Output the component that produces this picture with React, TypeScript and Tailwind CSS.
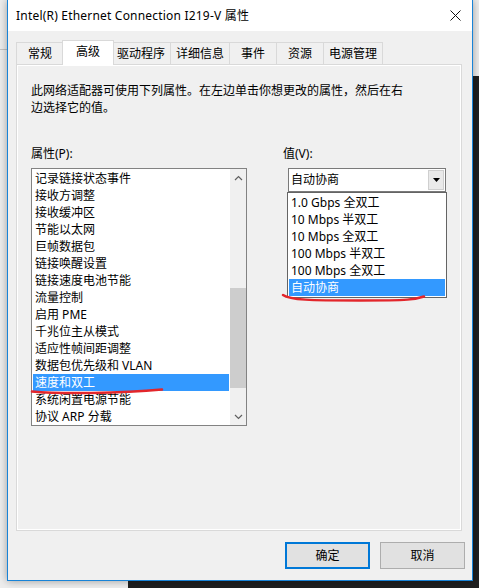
import React from "react";

const props = [
  "记录链接状态事件",
  "接收方调整",
  "接收缓冲区",
  "节能以太网",
  "巨帧数据包",
  "链接唤醒设置",
  "链接速度电池节能",
  "流量控制",
  "启用 PME",
  "千兆位主从模式",
  "适应性帧间距调整",
  "数据包优先级和 VLAN",
  "速度和双工",
  "系统闲置电源节能",
  "协议 ARP 分载",
];

const values = [
  "1.0 Gbps 全双工",
  "10 Mbps 半双工",
  "10 Mbps 全双工",
  "100 Mbps 半双工",
  "100 Mbps 全双工",
  "自动协商",
];

const tabs = ["常规", "高级", "驱动程序", "详细信息", "事件", "资源", "电源管理"];
const tabW = ["w-[48px]", "w-[52px]", "w-[60px]", "w-[60px]", "w-[48px]", "w-[48px]", "w-[60px]"];

function Chevron({ up }: { up?: boolean }) {
  return (
    <svg width="9" height="6" viewBox="0 0 9 6">
      <path
        d={up ? "M1 5 L4.5 1.5 L8 5" : "M1 1 L4.5 4.5 L8 1"}
        fill="none"
        stroke="#606060"
        strokeWidth="1.2"
      />
    </svg>
  );
}

export default function App() {
  return (
    <div className="relative w-[479px] h-[588px] overflow-hidden bg-[#ededed] font-['Noto_Sans','Noto_Sans_CJK_SC',sans-serif] text-[12px] text-black">
      {/* desktop background */}
      <div className="absolute left-0 top-[49px] w-[7px] h-px bg-[#c4c4c4]" />
      <div className="absolute left-[473px] top-[76px] right-0 bottom-0 bg-[#1f1f1f]" />
      <div className="absolute left-[128px] top-[581px] right-0 bottom-0 bg-[#1f1f1f]" />

      {/* window */}
      <div className="absolute left-[7px] top-0 w-[466px] h-[581px] border-x border-b border-[#1883d7] bg-[#f0f0f0] flex flex-col shadow-[0_0_8px_rgba(0,0,0,0.35)]">
        {/* title bar */}
        <div className="h-[31px] bg-white flex items-center justify-between pl-[8px] pr-[11px] shrink-0">
          <span className="leading-none tracking-[0.2px]">Intel(R) Ethernet Connection I219-V 属性</span>
          <svg width="11" height="11" viewBox="0 0 11 11">
            <path d="M0.5 0.5 L10.5 10.5 M10.5 0.5 L0.5 10.5" stroke="#111" strokeWidth="1" />
          </svg>
        </div>

        {/* tabs */}
        <div className="mt-[9px] pl-[8px] flex items-end h-[24px] shrink-0">
          {tabs.map((t, i) =>
            i === 1 ? (
              <div
                key={t}
                className={`${tabW[i]} h-[25px] -mx-[2px] relative top-[1px] z-10 bg-white border border-b-0 border-[#d9d9d9] flex items-center justify-center pb-[3px]`}
              >
                {t}
              </div>
            ) : (
              <div
                key={t}
                className={`${tabW[i]} h-[22px] bg-[#f0f0f0] border border-b-0 border-[#d9d9d9] -ml-px first:ml-0 flex items-center justify-center`}
              >
                {t}
              </div>
            )
          )}
        </div>

        {/* panel */}
        <div className="ml-[8px] w-[446px] h-[467px] border border-[#d9d9d9] bg-[#f0f0f0] shadow-[inset_0_0_0_1px_#ffffff] pt-[17px] pl-[14px] shrink-0">
          <div className="leading-[17px]">
            <div>此网络适配器可使用下列属性。在左边单击你想更改的属性，然后在右</div>
            <div>边选择它的值。</div>
          </div>

          <div className="mt-[29px] flex gap-[36px]">
            {/* left column */}
            <div className="w-[216px]">
              <div className="leading-[17px]">属性(P):</div>
              <div className="mt-[6px] w-[216px] h-[258px] border border-[#828282] bg-white flex">
                <div className="w-[198px] pt-[1px]">
                  {props.map((p, i) =>
                    i === 12 ? (
                      <div key={p} className="mx-[1px] h-[17px] leading-[17px] pl-[2px] bg-[#3399ff] text-white whitespace-nowrap">
                        {p}
                      </div>
                    ) : (
                      <div key={p} className="h-[17px] leading-[17px] pl-[3px] whitespace-nowrap">
                        {p}
                      </div>
                    )
                  )}
                </div>
                <div className="w-[16px] bg-[#f0f0f0] flex flex-col">
                  <div className="h-[17px] flex items-center justify-center">
                    <Chevron up />
                  </div>
                  <div className="flex-1">
                    <div className="mt-[102px] h-[100px] bg-[#cdcdcd]" />
                  </div>
                  <div className="h-[17px] flex items-center justify-center">
                    <Chevron />
                  </div>
                </div>
              </div>
            </div>

            {/* right column */}
            <div className="w-[164px]">
              <div className="leading-[17px]">值(V):</div>
              <div className="relative mt-[6px] ml-[5px] w-[158px] h-[24px] border border-[#7a7a7a] bg-white flex items-center">
                <span className="pl-[2px] flex-1 leading-none">自动协商</span>
                <div className="w-[16px] h-[20px] mr-[1px] border border-[#cfcfcf] bg-[#eaeaea] flex items-center justify-center">
                  <svg width="7" height="4" viewBox="0 0 7 4">
                    <path d="M0 0 L7 0 L3.5 4 Z" fill="#000" />
                  </svg>
                </div>
                {/* dropdown list */}
                <div className="absolute left-[-2px] top-[23px] w-[160px] border border-[#646464] bg-white pt-[1px] pb-[1px] z-20">
                  {values.map((v, i) =>
                    i === 5 ? (
                      <div key={v} className="mx-[1px] h-[17px] leading-[17px] pl-[2px] bg-[#3399ff] text-white">
                        {v}
                      </div>
                    ) : (
                      <div key={v} className="h-[17px] leading-[17px] pl-[3px]">
                        {v}
                      </div>
                    )
                  )}
                </div>
              </div>
            </div>
          </div>
        </div>

        {/* buttons */}
        <div className="mt-[11px] pr-[7px] flex justify-end gap-[10px]">
          <button className="w-[85px] h-[27px] border-2 border-[#0078d7] bg-[#e1e1e1] leading-none">确定</button>
          <button className="w-[85px] h-[27px] border border-[#adadad] bg-[#e1e1e1] leading-none">取消</button>
        </div>
      </div>

      {/* red annotations */}
      <svg className="absolute left-0 top-0 pointer-events-none z-30" width="479" height="588">
        <path d="M32 391.5 C 60 394, 120 393.5, 162 389.5" fill="none" stroke="#e3262b" strokeWidth="2.5" strokeLinecap="round" />
        <path d="M283 295 C 290 300, 310 300.5, 360 300.5 S 415 299.5, 424 296.5" fill="none" stroke="#e3262b" strokeWidth="2.5" strokeLinecap="round" />
      </svg>
    </div>
  );
}
